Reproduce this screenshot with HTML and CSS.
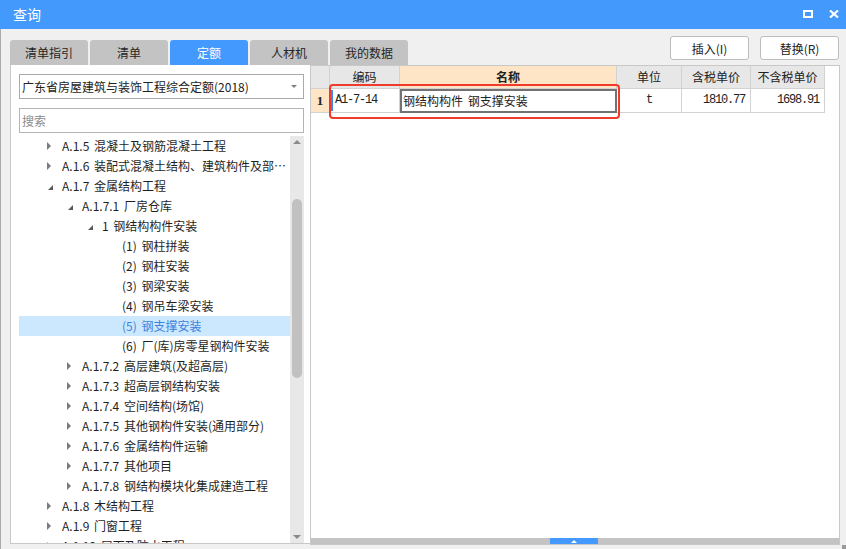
FILE: index.html
```html
<!DOCTYPE html>
<html lang="zh-CN">
<head>
<meta charset="utf-8">
<title>查询</title>
<link rel="stylesheet" href="styles.css">
</head>
<body>
<div class="window">
  <header class="titlebar">
    <span class="title">查询</span>
    <div class="win-ctrls">
      <svg class="ico" width="10" height="8" viewBox="0 0 10 8"><rect x="1" y="1" width="8" height="6" fill="none" stroke="#fff" stroke-width="2"/></svg>
      <svg class="ico" width="10" height="8" viewBox="0 0 10 8"><path d="M1 0.5 L9 7.5 M9 0.5 L1 7.5" stroke="#fff" stroke-width="2.2" fill="none"/></svg>
    </div>
  </header>
  <div class="frame">
    <div class="toolbar">
      <nav class="tabs">
        <div class="tab">清单指引</div>
        <div class="tab">清单</div>
        <div class="tab active">定额</div>
        <div class="tab">人材机</div>
        <div class="tab">我的数据</div>
      </nav>
      <div class="actions">
        <button class="btn">插入(I)</button>
        <button class="btn">替换(R)</button>
      </div>
    </div>
    <div class="content">
      <aside class="left">
        <div class="select"><span class="select-text">广东省房屋建筑与装饰工程综合定额(2018)</span><span class="caret"></span></div>
        <div class="search">搜索</div>
        <div class="tree-wrap">
          <ul class="tree">
            <li class="node l1"><span class="tg closed"></span><span class="lbl">A.1.5 混凝土及钢筋混凝土工程</span></li>
            <li class="node l1"><span class="tg closed"></span><span class="lbl">A.1.6 装配式混凝土结构、建筑构件及部品工程</span></li>
            <li class="node l1"><span class="tg open"></span><span class="lbl">A.1.7 金属结构工程</span></li>
            <li class="node l2"><span class="tg open"></span><span class="lbl">A.1.7.1 厂房仓库</span></li>
            <li class="node l3"><span class="tg open"></span><span class="lbl">1 钢结构构件安装</span></li>
            <li class="node l4"><span class="tg"></span><span class="lbl">(1) 钢柱拼装</span></li>
            <li class="node l4"><span class="tg"></span><span class="lbl">(2) 钢柱安装</span></li>
            <li class="node l4"><span class="tg"></span><span class="lbl">(3) 钢梁安装</span></li>
            <li class="node l4"><span class="tg"></span><span class="lbl">(4) 钢吊车梁安装</span></li>
            <li class="node l4 selected"><span class="tg"></span><span class="lbl">(5) 钢支撑安装</span></li>
            <li class="node l4"><span class="tg"></span><span class="lbl">(6) 厂(库)房零星钢构件安装</span></li>
            <li class="node l2"><span class="tg closed"></span><span class="lbl">A.1.7.2 高层建筑(及超高层)</span></li>
            <li class="node l2"><span class="tg closed"></span><span class="lbl">A.1.7.3 超高层钢结构安装</span></li>
            <li class="node l2"><span class="tg closed"></span><span class="lbl">A.1.7.4 空间结构(场馆)</span></li>
            <li class="node l2"><span class="tg closed"></span><span class="lbl">A.1.7.5 其他钢构件安装(通用部分)</span></li>
            <li class="node l2"><span class="tg closed"></span><span class="lbl">A.1.7.6 金属结构件运输</span></li>
            <li class="node l2"><span class="tg closed"></span><span class="lbl">A.1.7.7 其他项目</span></li>
            <li class="node l2"><span class="tg closed"></span><span class="lbl">A.1.7.8 钢结构模块化集成建造工程</span></li>
            <li class="node l1"><span class="tg closed"></span><span class="lbl">A.1.8 木结构工程</span></li>
            <li class="node l1"><span class="tg closed"></span><span class="lbl">A.1.9 门窗工程</span></li>
            <li class="node l1"><span class="tg closed"></span><span class="lbl">A.1.10 屋面及防水工程</span></li>
          </ul>
          <div class="vscroll">
            <div class="sb-btn"><span class="arr-up"></span></div>
            <div class="sb-thumb"></div>
            <div class="sb-space"></div>
            <div class="sb-btn"><span class="arr-down"></span></div>
          </div>
        </div>
      </aside>
      <section class="right">
        <div class="grid">
          <div class="row head">
            <div class="c c-no"></div>
            <div class="c c-code">编码</div>
            <div class="c c-name hl">名称</div>
            <div class="c c-unit">单位</div>
            <div class="c c-p1">含税单价</div>
            <div class="c c-p2">不含税单价</div>
          </div>
          <div class="row data">
            <div class="c c-no">1</div>
            <div class="c c-code mono">A1-7-14</div>
            <div class="c c-name edit">钢结构构件 钢支撑安装</div>
            <div class="c c-unit mono">t</div>
            <div class="c c-p1 mono num">1810.77</div>
            <div class="c c-p2 mono num">1698.91</div>
          </div>
        </div>
        <div class="fill"></div>
        <div class="hbar"><span class="hthumb"><span class="harr"></span></span></div>
        <div class="annot"></div>
      </section>
    </div>
  </div>
  <div class="grip"></div>
</div>
</body>
</html>
```

FILE: styles.css
```css
* { box-sizing: border-box; margin: 0; padding: 0; }
html, body { width: 846px; height: 549px; overflow: hidden; }
body {
  font-family: "Noto Sans CJK SC", "Microsoft YaHei", sans-serif;
  font-size: 12px;
  color: #222;
  background: #f0f0f0;
}
.window { width: 846px; height: 549px; position: relative; background: #f0f0f0; }

.titlebar {
  height: 29px;
  background: #4499fd;
  color: #fff;
  display: flex;
  align-items: center;
  padding: 0 7px 0 13px;
}
.title { font-size: 14px; line-height: 29px; }
.win-ctrls { margin-left: auto; display: flex; align-items: center; gap: 16px; margin-top: -2px; }
.ico { display: block; }

.frame { border-left: 1px solid #ababab; height: 520px; }

.toolbar { height: 36px; display: flex; justify-content: space-between; padding: 0 7px 0 9px; }
.tabs { display: flex; gap: 2px; align-self: flex-end; }
.tab {
  width: 78px; height: 25px; line-height: 25px;
  text-align: center;
  background: #c3c3c3;
  color: #262626;
  border-radius: 3px 3px 0 0;
}
.tab.active { background: #4499ff; color: #fff; }
.actions { display: flex; gap: 11px; margin-top: 7px; align-self: flex-start; }
.btn {
  width: 79px; height: 24px;
  background: #fff;
  border: 1px solid #bdbdbd;
  border-radius: 3px;
  font: inherit;
  color: #222;
}

.content { display: flex; height: 480px; padding: 0 6px 0 9px; }

.left {
  width: 300px; height: 479px;
  background: #fff;
  border-left: 1px solid #c8c8c8;
  border-bottom: 1px solid #c8c8c8;
  padding: 9px 6px 0 8px;
  display: flex; flex-direction: column;
}
.select {
  height: 25px;
  border: 1px solid #aaaaaa;
  display: flex; align-items: center;
  padding: 0 6px 0 2px;
  line-height: 23px;
}
.select-text { flex: 1; white-space: nowrap; overflow: hidden; }
.caret {
  width: 0; height: 0;
  border-left: 3px solid transparent;
  border-right: 3px solid transparent;
  border-top: 3px solid #808080;
}
.search {
  margin-top: 9px;
  height: 25px;
  border: 1px solid #b4b4b4;
  padding-left: 2px;
  line-height: 23px;
  color: #8c8c8c;
}
.tree-wrap { margin-top: 3px; flex: 1; display: flex; min-height: 0; }
.tree { list-style: none; flex: 1; overflow: hidden; min-width: 0; }
.node {
  height: 20px; line-height: 20px;
  display: flex; align-items: center;
  white-space: nowrap;
  padding-right: 4px;
}
.node.l1 { padding-left: 28px; }
.node.l2 { padding-left: 48px; }
.node.l3 { padding-left: 68px; }
.node.l4 { padding-left: 88px; }
.tg { width: 15px; height: 20px; flex: none; position: relative; }
.tg.closed::after {
  content: ""; position: absolute; left: 0; top: 6px;
  border-left: 4px solid #7a7a7a;
  border-top: 4px solid transparent;
  border-bottom: 4px solid transparent;
}
.tg.open::after {
  content: ""; position: absolute; left: 1px; top: 9px;
  border-bottom: 5px solid #5a5a5a;
  border-left: 5px solid transparent;
}
.lbl { overflow: hidden; text-overflow: ellipsis; min-width: 0; color: #1f1f1f; word-spacing: 2px; }
.node.selected { background: #cce8ff; }
.node.selected .lbl { color: #3c82dc; }

.vscroll { width: 14px; background: #e8e8e8; display: flex; flex-direction: column; }
.sb-btn { height: 12px; display: flex; align-items: center; justify-content: center; }
.arr-up { border-left: 4px solid transparent; border-right: 4px solid transparent; border-bottom: 4px solid #8a8a8a; }
.arr-down { border-left: 4px solid transparent; border-right: 4px solid transparent; border-top: 4px solid #8a8a8a; }
.sb-thumb { width: 10px; height: 179px; margin: 51px 0 0 2px; background: #c1c1c1; border-radius: 5px; }
.sb-space { flex: 1; }

.right {
  width: 530px; height: 480px;
  background: #fff;
  border: 1px solid #c8c8c8;
  position: relative;
  display: flex; flex-direction: column;
}
.grid { width: 514px; }
.row { display: flex; }
.c {
  border-right: 1px solid #d2d2d2;
  border-bottom: 1px solid #d2d2d2;
  white-space: nowrap;
  overflow: hidden;
}
.c-no { width: 19px; }
.c-code { width: 70px; }
.c-name { width: 217px; }
.c-unit { width: 65px; }
.c-p1 { width: 69px; }
.c-p2 { width: 74px; }
.head .c {
  height: 23px; line-height: 22px;
  background: #e7e7e7;
  text-align: center;
  color: #222;
}
.head .c.hl { background: #fde5c6; font-weight: bold; }
.data .c { height: 24px; line-height: 23px; position: relative; }
.data .c-no {
  background: #fde5c6;
  text-align: center;
  font-family: "Liberation Serif", serif;
  font-weight: bold;
  font-size: 13px;
}
.mono { font-family: "Liberation Mono", monospace; font-size: 12px; letter-spacing: -1.2px; }
.data .c-code { padding-left: 5px; }
.data .c-code::before {
  content: ""; position: absolute; left: 1px; top: 1px; bottom: 1px;
  width: 2px; background: #3a89ea;
}
.data .c-name.edit { border: 2px solid #727272; line-height: 20px; padding-left: 1px; font-size: 12px; word-spacing: 2px; }
.data .c-unit { text-align: center; }
.data .num { text-align: right; padding-right: 5px; }

.fill { flex: 1; }
.hbar { height: 6px; background: #c3c3c3; display: flex; }
.hthumb {
  width: 48px; margin-left: 239px;
  background: #4499ff;
  display: flex; align-items: center; justify-content: center;
}
.harr { border-left: 3px solid transparent; border-right: 3px solid transparent; border-bottom: 3px solid #fff; }

.annot {
  position: absolute;
  left: 18px; top: 18px;
  width: 291px; height: 35px;
  border: 2px solid #f03a2c;
  border-radius: 4px;
}

.grip {
  position: absolute; right: 0; bottom: 0;
  width: 4px; height: 4px;
  background:
    radial-gradient(circle, #9a9a9a 0.9px, transparent 1px) 0 0 / 2px 2px;
}
```
